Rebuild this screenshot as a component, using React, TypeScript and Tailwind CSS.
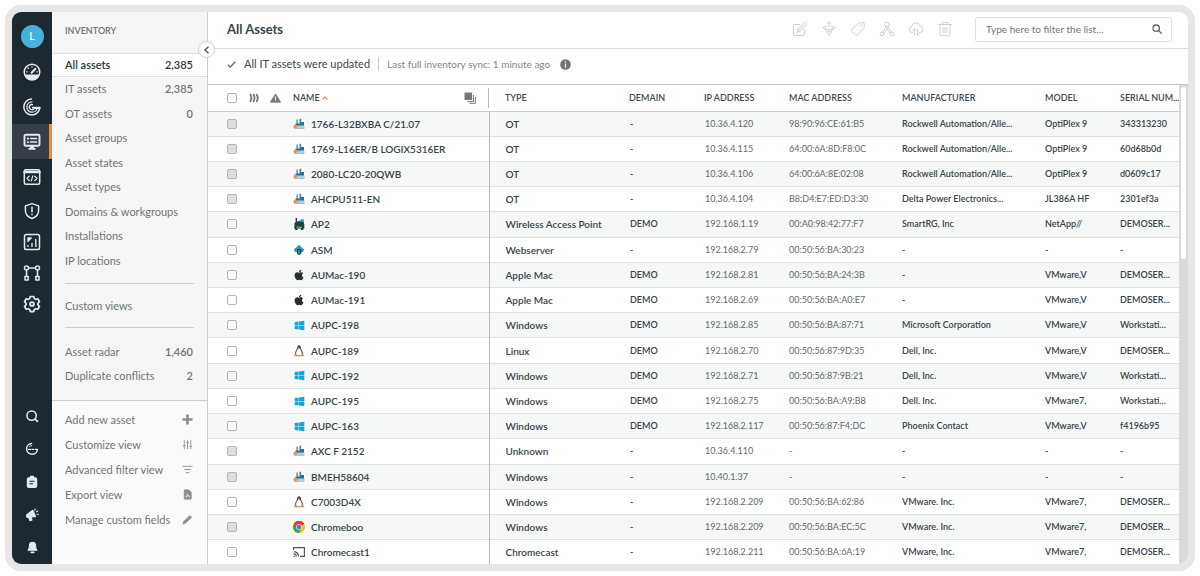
import type { ReactNode } from "react";
import { FaApple, FaWindows } from "react-icons/fa";

/* ---------- rail icons ---------- */

function Svg({ className = "size-4", children }: { className?: string; children: ReactNode }) {
  return (
    <svg viewBox="0 0 18 18" className={className} fill="none" stroke="currentColor" strokeWidth="1.5" strokeLinecap="round" strokeLinejoin="round" aria-hidden="true">
      {children}
    </svg>
  );
}

const GaugeIcon = () => (
  <Svg className="size-[18px]">
    <circle cx="9" cy="9" r="7.800" />
    <path d="M2.200 12.200h13.600A7.800 7.800 0 0 1 9 16.800a7.800 7.800 0 0 1-6.800-4.600z" fill="currentColor" />
    <path d="M8.600 9.800l3.800-4" strokeWidth="2" />
    <path d="M9 3.600v.5M5 5l.4.400M3.400 8.800h.6M14 8.800h.6" strokeWidth="1.300" />
  </Svg>
);
const RadarIcon = () => (
  <Svg className="size-[18px]">
    <path d="M8.500 1A8 8 0 1 0 16.800 9.500H9.500" strokeWidth="1.500" />
    <path d="M9 3.800A5.200 5.200 0 1 0 14 10.600" strokeWidth="1.300" />
    <path d="M9.500 6.600a2.600 2.600 0 1 0 1.700 3.800" strokeWidth="1.300" />
    <path d="M10.500 10h6" strokeWidth="2" />
  </Svg>
);
const MonitorIcon = () => (
  <Svg className="size-[18px]">
    <rect x="1.500" y="1.800" width="15" height="11" rx="1.200" strokeWidth="1.900" />
    <path d="M4.800 5.500h.4M4.800 9.100h.4" strokeWidth="1.800" />
    <path d="M7.500 5.500h6M7.500 9.100h6" strokeWidth="1.500" />
    <path d="M7 13h4v2h1.500v1.700h-7V15H7z" fill="currentColor" stroke="none" />
  </Svg>
);
const CodeIcon = () => (
  <Svg className="size-[18px]">
    <rect x="1.300" y="1.800" width="15.400" height="14.400" rx="1.500" />
    <path d="M1.500 4h15" strokeWidth="2.400" />
    <path d="M6.200 8.200L4 10.300l2.200 2.200M11.800 8.200l2.200 2.100-2.200 2.200M9.800 7.800l-1.500 5" strokeWidth="1.200" />
  </Svg>
);
const ShieldIcon = () => (
  <Svg className="size-[18px]">
    <path d="M9 1.600l6.600 2.300v4.600c0 4-2.600 6.600-6.600 8-4-1.400-6.600-4-6.600-8V3.900z" />
    <path d="M9 5.200v4.600M9 12.300v.3" strokeWidth="1.600" />
  </Svg>
);
const ChartIcon = () => (
  <Svg className="size-[18px]">
    <rect x="1.500" y="1.500" width="15" height="15" rx="1.800" />
    <path d="M5 8.200V5h3.200zM5 12.400v1M9 10.400v3M12.800 6.500v6.900" strokeWidth="1.400" fill="currentColor" />
  </Svg>
);
const NodesIcon = () => (
  <Svg className="size-[18px]">
    <circle cx="3.500" cy="4" r="2" />
    <circle cx="14.500" cy="4" r="2" />
    <rect x="2" y="12.500" width="3.200" height="3.400" />
    <rect x="12.800" y="12.500" width="3.200" height="3.400" />
    <path d="M3.500 6v6M14.500 6v6M5.500 4h7" />
  </Svg>
);
const GearIcon = () => (
  <Svg className="size-[18px]">
    <path d="M7.300 1.500h3.400l.6 2.100 1.300.8 2.200-.6 1.700 2.900-1.600 1.600v1.500l1.600 1.600-1.700 2.900-2.200-.6-1.300.8-.6 2.100H7.300l-.6-2.100-1.300-.8-2.200.6-1.700-2.900 1.600-1.600V8.300L1.500 6.700l1.700-2.900 2.200.6 1.300-.8z" strokeWidth="1.700" />
    <circle cx="9" cy="9" r="1.900" strokeWidth="1.900" />
  </Svg>
);
const RailSearchIcon = () => (
  <Svg className="size-[14px]">
    <circle cx="8.500" cy="8.500" r="6" strokeWidth="2" />
    <path d="M13 13l3 3" strokeWidth="2.200" />
  </Svg>
);
const SyncIcon = () => (
  <Svg className="size-[14px]">
    <path d="M8.500 1.800A7 7 0 1 0 16 9.800" strokeWidth="1.900" />
    <path d="M4.500 9.500H16" strokeWidth="1.700" strokeDasharray="2.500 2" />
    <path d="M5.500 6.200c.8-.9 1.800-1.300 3-1.400" strokeWidth="1.200" />
  </Svg>
);
const ClipboardIcon = () => (
  <Svg className="size-[14px]">
    <path d="M5 3.500h1.500a2.500 2 0 0 1 5 0H13a2 2 0 0 1 2 2V14a2 2 0 0 1-2 2H5a2 2 0 0 1-2-2V5.500a2 2 0 0 1 2-2z" fill="currentColor" />
    <path d="M6.300 8h5.400M6.300 11.300h3.400" stroke="#1d2830" />
  </Svg>
);
const MegaphoneIcon = () => (
  <Svg className="size-[14px]">
    <path d="M2 9l8-6 3.500 8-6 .5 1.500 4-2.500.8L4.600 12 2.500 12.200z" fill="currentColor" />
    <path d="M12.500 3l.6-1.800M14.500 5l2-1.200M15.500 8h1.700" strokeWidth="1.400" />
  </Svg>
);
const BellIcon = () => (
  <Svg className="size-[13px]">
    <path d="M9 1.800c3 0 4.300 2.200 4.300 5 0 3 .7 4.500 1.800 6H2.900c1.100-1.500 1.800-3 1.800-6 0-2.800 1.300-5 4.300-5z" fill="currentColor" />
    <path d="M7.300 15.600h3.400" strokeWidth="2.400" />
  </Svg>
);

/* ---------- toolbar icons ---------- */

function Thin({ children }: { children: ReactNode }) {
  return (
    <svg viewBox="0 0 16 16" className="size-4" fill="none" stroke="currentColor" strokeWidth="1" strokeLinecap="round" strokeLinejoin="round" aria-hidden="true">
      {children}
    </svg>
  );
}
const EditIcon = () => (
  <Thin>
    <path d="M7.500 3.500h-5a1 1 0 0 0-1 1v9a1 1 0 0 0 1 1h9a1 1 0 0 0 1-1V9" />
    <path d="M5 11l.8-3.200 6.200-6.200a1 1 0 0 1 1.400 0l1 1a1 1 0 0 1 0 1.400L8.200 10.200z" />
    <path d="M6 8l2 2M7.800 8.200l4.400-4.400" />
  </Thin>
);
const MergeIcon = () => (
  <Thin>
    <path d="M8 .8v6M6.200 2.500L8 .8l1.800 1.700" />
    <path d="M6 4.800L1.500 6.500 8 9.200l6.500-2.700L10 4.800" />
    <path d="M3.500 7.600l1 1.700L8 11l3.500-1.700 1-1.700M5.800 10.200l.6 2L8 14.500l1.600-2.300.6-2" />
  </Thin>
);
const TagIcon = () => (
  <Thin>
    <path d="M9.200 2l4.800-.3.500 4.500-7.300 7.900a1 1 0 0 1-1.400 0L1.500 10a1 1 0 0 1 0-1.400z" />
    <circle cx="11.400" cy="4.700" r=".6" />
  </Thin>
);
const RelationsIcon = () => (
  <Thin>
    <circle cx="8" cy="3.500" r="2.400" />
    <circle cx="3" cy="13" r="1.800" />
    <circle cx="13" cy="13" r="1.800" />
    <path d="M6.900 5.700L3.800 11.200M9.100 5.700l3.100 5.500M8 6v2.400L4.800 12M8 8.400l3.200 3.600" />
  </Thin>
);
const CloudIcon = () => (
  <Thin>
    <path d="M4.500 11.500H4a3 3 0 0 1-.5-5.900A4.500 4.500 0 0 1 12.200 5a3.300 3.300 0 0 1 0 6.500h-.7" />
    <path d="M6.300 14V7.800M4.800 9.300l1.500-1.500 1.500 1.500M9.700 8v6.200M8.200 12.700l1.500 1.500 1.500-1.500" />
  </Thin>
);
const TrashIcon = () => (
  <Thin>
    <path d="M1.500 3.500h13M5.500 3.500v-2h5v2M3 3.500v10a1.200 1.200 0 0 0 1.200 1.200h7.600A1.200 1.200 0 0 0 13 13.500v-10M6 6.200v5.600M8 6.200v5.600M10 6.200v5.600" />
  </Thin>
);

/* ---------- device icons ---------- */

const OtIcon = () => (
  <svg viewBox="0 0 12 12" className="size-3" aria-hidden="true">
    <path d="M3.500 1.500h1.300V6H3.500zM6.500.8h1.700v5.700H6.500z" fill="#4a7f9c" />
    <path d="M2.500 5.500h4l2-1.500h2.500V8H2.500z" fill="#2f6f93" />
    <path d="M5 7.500h6.500V10H5z" fill="#a5d3ea" />
    <circle cx="2.600" cy="8.600" r="2.200" fill="#e0995b" />
    <path d="M1 10h10.500v.9H1z" fill="#b5b9bc" />
  </svg>
);
const AccessPointIcon = () => (
  <svg viewBox="0 0 12 12" className="size-3" aria-hidden="true">
    <path d="M2.600 0h1.500v5H2.600z" fill="#2e3a40" />
    <path d="M5 3.500L9 .8l2 .8V5H5z" fill="#3fb3c4" />
    <path d="M1.500 5l2.500-1.500h6L11.300 6v4.500h-1V12H8v-1.500H4.500V12H2.200v-1.500H1.200z" fill="#2e3a40" />
    <path d="M3.500 8.500h5.500v1.700H3.500z" fill="#2fae7c" />
  </svg>
);
const WebserverIcon = () => (
  <svg viewBox="0 0 12 12" className="size-3" aria-hidden="true">
    <path d="M6 .8L8.300 3 11.300 5.500 9.500 8.200H2.500L.7 5.500 3.700 3z" fill="#2c9ab7" />
    <path d="M4 5h4.200v4.700L6 11.300 4 9.700z" fill="#27414d" />
    <path d="M5.500 6h1v4h-1z" fill="#5fb9cf" />
  </svg>
);
const LinuxIcon = () => (
  <svg viewBox="0 0 12 12" className="size-3" aria-hidden="true">
    <path d="M6 .3c1.300 0 1.800.9 1.800 2.300 0 1.700 2.200 3.300 2.200 6.200 0 1.500-1.800 2.400-4 2.400S2 10.300 2 8.800c0-2.900 2.200-4.500 2.200-6.200C4.200 1.200 4.700.3 6 .3z" fill="#444" />
    <path d="M6 3.200c1.100 0 2.900 3.300 2.900 5.500S7.400 10.600 6 10.600 3.100 10.900 3.100 8.700 4.900 3.200 6 3.200z" fill="#fff" />
    <path d="M5 2.600h2L6 3.700zM1.200 9.300l1.500-.8 1.700 2-.8 1.200-2.500-.6zM10.800 9.300l-1.500-.8-1.700 2 .8 1.200 2.500-.6z" fill="#dc9a5a" />
  </svg>
);
const ChromeIcon = () => (
  <svg viewBox="0 0 24 24" className="size-3" aria-hidden="true">
    <circle cx="12" cy="12" r="12" fill="#fbc116" />
    <path d="M12 12L1.610 6A12 12 0 0 1 22.390 6z" fill="#e33b2e" />
    <path d="M12 12L1.610 6A12 12 0 0 0 12 24l5.200-9z" fill="#2da94f" />
    <path d="M12 6.500h10.700L22.390 6A12 12 0 0 0 1.610 6l5.600 8.800z" fill="#e33b2e" />
    <circle cx="12" cy="12" r="5.600" fill="#fff" />
    <circle cx="12" cy="12" r="4.500" fill="#3f7de0" />
  </svg>
);
const CastIcon = () => (
  <svg viewBox="0 0 12 12" className="size-3" fill="none" stroke="#4a5257" strokeWidth="1.100" aria-hidden="true">
    <path d="M.6 4V1.600h10.800v8.800H7" />
    <path d="M.6 10.400h1.200M.6 7.900c1.600 0 2.700 1.100 2.700 2.600M.6 5.700c2.900 0 4.900 2 4.900 4.800" />
  </svg>
);

const deviceIcons = {
  ot: <OtIcon />,
  ap: <AccessPointIcon />,
  web: <WebserverIcon />,
  mac: <FaApple className="size-3 text-[#2a2f33]" />,
  win: <FaWindows className="size-[11px] text-[#1ba3d6]" />,
  linux: <LinuxIcon />,
  chrome: <ChromeIcon />,
  cast: <CastIcon />,
};

/* ---------- data ---------- */

type Asset = [keyof typeof deviceIcons, boolean, string, string, string, string, string, string, string, string];

const assets: Asset[] = [
  ["ot", true, "1766-L32BXBA C/21.07", "OT", "-", "10.36.4.120", "98:90:96:CE:61:B5", "Rockwell Automation/Alle...", "OptiPlex 9", "343313230"],
  ["ot", true, "1769-L16ER/B LOGIX5316ER", "OT", "-", "10.36.4.115", "64:00:6A:8D:F8:0C", "Rockwell Automation/Alle...", "OptiPlex 9", "60d68b0d"],
  ["ot", true, "2080-LC20-20QWB", "OT", "-", "10.36.4.106", "64:00:6A:8E:02:08", "Rockwell Automation/Alle...", "OptiPlex 9", "d0609c17"],
  ["ot", true, "AHCPU511-EN", "OT", "-", "10.36.4.104", "B8:D4:E7:ED:D3:30", "Delta Power Electronics...", "JL386A HF", "2301ef3a"],
  ["ap", false, "AP2", "Wireless Access Point", "DEMO", "192.168.1.19", "00:A0:98:42:77:F7", "SmartRG, Inc", "NetApp//", "DEMOSER..."],
  ["web", false, "ASM", "Webserver", "-", "192.168.2.79", "00:50:56:BA:30:23", "-", "-", "-"],
  ["mac", false, "AUMac-190", "Apple Mac", "DEMO", "192.168.2.81", "00:50:56:BA:24:3B", "-", "VMware,V", "DEMOSER..."],
  ["mac", false, "AUMac-191", "Apple Mac", "DEMO", "192.168.2.69", "00:50:56:BA:A0:E7", "-", "VMware,V", "DEMOSER..."],
  ["win", false, "AUPC-198", "Windows", "DEMO", "192.168.2.85", "00:50:56:BA:87:71", "Microsoft Corporation", "VMware,V", "Workstati..."],
  ["linux", false, "AUPC-189", "Linux", "DEMO", "192.168.2.70", "00:50:56:87:9D:35", "Dell, Inc.", "VMware,V", "DEMOSER..."],
  ["win", false, "AUPC-192", "Windows", "DEMO", "192.168.2.71", "00:50:56:87:9B:21", "Dell, Inc.", "VMware,V", "Workstati..."],
  ["win", false, "AUPC-195", "Windows", "DEMO", "192.168.2.75", "00:50:56:BA:A9:B8", "Dell. Inc.", "VMware7,", "Workstati..."],
  ["win", false, "AUPC-163", "Windows", "DEMO", "192.168.2.117", "00:50:56:87:F4;DC", "Phoenix Contact", "VMware,V", "f4196b95"],
  ["ot", true, "AXC F 2152", "Unknown", "-", "10.36.4.110", "-", "-", "-", "-"],
  ["ot", true, "BMEH58604", "Windows", "-", "10.40.1.37", "-", "-", "-", "-"],
  ["linux", false, "C7003D4X", "Windows", "-", "192.168.2.209", "00:50:56:BA:62:86", "VMware. Inc.", "VMware7,", "DEMOSER..."],
  ["chrome", true, "Chromeboo", "Windows", "-", "192.168.2.209", "00:50:56:BA:EC:5C", "VMware. Inc.", "VMware7,", "DEMOSER..."],
  ["cast", false, "Chromecast1", "Chromecast", "-", "192.168.2.211", "00:50:56:BA:6A:19", "VMware, Inc.", "VMware7,", "DEMOSER..."],
];

const navItems: { label: string; count?: string }[] = [
  { label: "IT assets", count: "2,385" },
  { label: "OT assets", count: "0" },
  { label: "Asset groups" },
  { label: "Asset states" },
  { label: "Asset types" },
  { label: "Domains & workgroups" },
  { label: "Installations" },
  { label: "IP locations" },
];

const actions: { label: string; icon: ReactNode }[] = [
  { label: "Add new asset", icon: <path d="M6 .5v11M.5 6h11" strokeWidth="2.800" /> },
  { label: "Customize view", icon: <path d="M2.500 1v10M6 1v10M9.500 1v10M1 7.500h3M4.500 4h3M8 8h3" strokeWidth="1" /> },
  { label: "Advanced filter view", icon: <path d="M.5 2.500h11M2.500 6h7M4 9.500h4" strokeWidth="1" /> },
  {
    label: "Export view",
    icon: (
      <>
        <path d="M2.500 1h5L10 3.500V11H2.500z" fill="currentColor" />
        <path d="M4.500 9V7.500h3.500V9M5 5l1.500 1.500" stroke="#fff" strokeWidth=".9" />
      </>
    ),
  },
  { label: "Manage custom fields", icon: <path d="M1 11l.8-3L8.500 1.500 10.700 3.500 4 10.200z" fill="currentColor" strokeWidth=".6" /> },
];

const railMain: { label: string; icon: ReactNode; active?: boolean }[] = [
  { label: "Dashboard", icon: <GaugeIcon /> },
  { label: "Radar", icon: <RadarIcon /> },
  { label: "Inventory", icon: <MonitorIcon />, active: true },
  { label: "Software", icon: <CodeIcon /> },
];
const railTools = [
  { label: "Risk", icon: <ShieldIcon /> },
  { label: "Reports", icon: <ChartIcon /> },
  { label: "Diagrams", icon: <NodesIcon /> },
  { label: "Configuration", icon: <GearIcon /> },
];
const railBottom = [
  { label: "Search", icon: <RailSearchIcon /> },
  { label: "Sync", icon: <SyncIcon /> },
  { label: "Tasks", icon: <ClipboardIcon /> },
  { label: "News", icon: <MegaphoneIcon /> },
  { label: "Notifications", icon: <BellIcon /> },
];
const tools = [
  { label: "Edit", icon: <EditIcon /> },
  { label: "Merge", icon: <MergeIcon /> },
  { label: "Tag", icon: <TagIcon /> },
  { label: "Relations", icon: <RelationsIcon /> },
  { label: "Rescan", icon: <CloudIcon /> },
  { label: "Delete", icon: <TrashIcon /> },
];

/* ---------- parts ---------- */

function Rail() {
  return (
    <nav aria-label="Main" className="flex w-10 shrink-0 flex-col bg-[#1d2830] text-[#e4e9ec]">
      <div className="flex h-[42px] items-end justify-center pb-[6px]">
        <button aria-label="Account" className="flex size-[23px] items-center justify-center rounded-full bg-[#44b2da] text-[11px] text-white">L</button>
      </div>
      {railMain.map((r) => (
        <button
          key={r.label}
          aria-label={r.label}
          className={`flex h-[35px] w-full items-center justify-center ${r.active ? "border-r-[3px] border-[#ee8a3c] bg-[#363f47] pl-[3px]" : ""}`}
        >
          {r.icon}
        </button>
      ))}
      <div className="mt-px flex flex-col">
        {railTools.map((r) => (
          <button key={r.label} aria-label={r.label} className="flex h-[31px] items-center justify-center">
            {r.icon}
          </button>
        ))}
      </div>
      <div className="mt-auto flex flex-col">
        {railBottom.map((r) => (
          <button key={r.label} aria-label={r.label} className="flex h-[33px] items-center justify-center">
            {r.icon}
          </button>
        ))}
      </div>
    </nav>
  );
}

function Sidebar() {
  const row = "flex items-center justify-between pl-[13px] pr-[14px]";
  return (
    <aside className="relative flex w-[156px] shrink-0 flex-col border-r border-[#cdcdcd] bg-[#f5f5f5] text-[11px] leading-4 text-[#6f7679]">
      <h2 className="flex h-[41px] items-center pb-1 pl-[13px] text-[9px] font-semibold">INVENTORY</h2>
      <a href="#all" className={`${row} h-6 border-y border-[#dedede] bg-white font-semibold text-[#2c383e]`}>
        <span>All assets</span>
        <span>2,385</span>
      </a>
      <div className="flex h-[196px] flex-col">
        {navItems.map((n) => (
          <a key={n.label} href="#view" className={`${row} flex-1`}>
            <span>{n.label}</span>
            {n.count && <span className="font-semibold">{n.count}</span>}
          </a>
        ))}
      </div>
      <div className="mx-[13px] mt-[10px] flex h-[45px] items-center border-y border-[#cdcdcd]">
        <a href="#custom">Custom views</a>
      </div>
      <div className="mt-3 flex flex-col">
        <a href="#radar" className={`${row} h-6`}>
          <span>Asset radar</span>
          <span className="font-semibold">1,460</span>
        </a>
        <a href="#duplicates" className={`${row} h-6`}>
          <span>Duplicate conflicts</span>
          <span className="font-semibold">2</span>
        </a>
      </div>
      <div className="mt-3 flex flex-1 flex-col border-t border-[#cdcdcd] bg-[#fbfbfb] pt-[6px]">
        {actions.map((a) => (
          <button key={a.label} className={`${row} h-[25px] text-left`}>
            <span>{a.label}</span>
            <svg viewBox="0 0 12 12" className="size-[11px] text-[#8c8f91]" fill="none" stroke="currentColor" aria-hidden="true">
              {a.icon}
            </svg>
          </button>
        ))}
      </div>
      <button aria-label="Collapse sidebar" className="absolute -right-2 top-[29px] z-10 flex size-[17px] items-center justify-center rounded-full border border-[#cdcdcd] bg-white text-[#555]">
        <svg viewBox="0 0 8 8" className="size-2" fill="none" stroke="currentColor" strokeWidth="1.400" aria-hidden="true">
          <path d="M5.500.8L2 4l3.500 3.200" />
        </svg>
      </button>
    </aside>
  );
}

function Check({ label, disabled = false }: { label: string; disabled?: boolean }) {
  return (
    <input
      type="checkbox"
      aria-label={label}
      disabled={disabled}
      className="block size-[10px] appearance-none rounded-[2px] border border-[#b1b5b7] bg-white disabled:bg-[#dedede]"
    />
  );
}

function AssetTable() {
  const head = "p-0 text-left text-[9px] font-semibold text-[#414c52]";
  return (
    <div className="flex min-h-0 flex-1 border-t border-[#c4c4c4]">
      <table className="w-full min-w-0 flex-1 table-fixed border-collapse whitespace-nowrap text-[9px] leading-3 text-[#37444b]">
        <colgroup>
          <col className="w-[38px]" />
          <col className="w-[47px]" />
          <col />
          <col className="w-[140px]" />
          <col className="w-[75px]" />
          <col className="w-[85px]" />
          <col className="w-[113px]" />
          <col className="w-[143px]" />
          <col className="w-[75px]" />
          <col className="w-[59px]" />
        </colgroup>
        <thead>
          <tr className="h-[26px] border-b border-[#cfcfcf]">
            <th className={`${head} pl-[19px]`}>
              <Check label="Select all assets" />
            </th>
            <th className={head}>
              <div className="flex items-center gap-[11px] pl-[3px] text-[#74797c]">
                <svg viewBox="0 0 10 10" className="size-[10px]" fill="none" stroke="currentColor" strokeWidth="1.800" aria-hidden="true">
                  <path d="M1 1c1.600 2.400 1.600 5.600 0 8M4.200 1c1.600 2.400 1.600 5.600 0 8M7.400 1c1.600 2.400 1.600 5.600 0 8" />
                </svg>
                <svg viewBox="0 0 12 10" className="h-[10px] w-[11px]" aria-hidden="true">
                  <path d="M6 .5l5.500 9H.5z" fill="currentColor" stroke="currentColor" strokeLinejoin="round" />
                  <path d="M6 3.300v3.200M6 7.600v1" stroke="#fff" strokeWidth="1.100" />
                </svg>
              </div>
            </th>
            <th className={head}>
              <div className="flex h-5 items-center gap-[2px] border-r border-[#b9b9b9] pr-3">
                <span>NAME</span>
                <svg viewBox="0 0 6 4" className="h-1 w-[6px]" fill="none" stroke="#ee8a3c" strokeWidth="1.200" aria-hidden="true">
                  <path d="M.6 3.200L3 1l2.400 2.200" />
                </svg>
                <svg viewBox="0 0 12 12" className="ml-auto size-3 text-[#74797c]" aria-hidden="true">
                  <path d="M.5.500h7.500V8H.5z" fill="currentColor" />
                  <path d="M9.500 3v6.500H3.500M11.300 5v6.300H5.500" fill="none" stroke="currentColor" />
                </svg>
              </div>
            </th>
            <th className={`${head} pl-4`}>TYPE</th>
            <th className={head}>DEMAIN</th>
            <th className={head}>IP ADDRESS</th>
            <th className={head}>MAC ADDRESS</th>
            <th className={head}>MANUFACTURER</th>
            <th className={head}>MODEL</th>
            <th className={head}>SERIAL NUM...</th>
          </tr>
        </thead>
        <tbody>
          {assets.map(([icon, disabled, name, type, domain, ip, mac, maker, model, serial]) => (
            <tr key={name} className="border-b border-[#e0e0e0] odd:bg-[#f6f7f7] last:border-b-0">
              <td className="p-0 pl-[19px]">
                <Check label={`Select ${name}`} disabled={disabled} />
              </td>
              <td className="p-0" />
              <td className="border-r border-[#b9b9b9] p-0 text-[10px] font-semibold">
                <div className="flex items-center gap-[6px]">
                  <span className="flex w-3 justify-center">{deviceIcons[icon]}</span>
                  <span>{name}</span>
                </div>
              </td>
              <td className="p-0 pl-4 text-[10px] font-semibold">{type}</td>
              <td className="p-0 pl-px font-semibold">{domain}</td>
              <td className="p-0 pl-px text-[#62696d]">{ip}</td>
              <td className="p-0 text-[#62696d]">{mac}</td>
              <td className="p-0 font-semibold">{maker}</td>
              <td className="p-0 font-semibold">{model}</td>
              <td className="p-0 font-semibold">{serial}</td>
            </tr>
          ))}
        </tbody>
      </table>
      <div className="w-[9px] shrink-0 bg-[#dadada] px-[2px] pt-[2px]">
        <div className="h-[172px] rounded-full bg-white" />
      </div>
    </div>
  );
}

export default function App() {
  return (
    <div className="flex min-h-screen bg-white p-[5px] font-['Lato','Noto_Sans',sans-serif]">
      <div className="flex min-w-0 flex-1 overflow-hidden rounded-[16px] border-[7px] border-[#e7e7e7] bg-white">
        <Rail />
        <Sidebar />
        <main className="flex min-w-0 flex-1 flex-col">
          <header className="flex h-[37px] items-center border-b border-[#dcdcdc] pb-[2px] pl-[19px] pr-4">
            <h1 className="text-[13px] font-bold leading-4 text-[#3a464c]">All Assets</h1>
            <div className="ml-auto flex items-center gap-[13px] text-[#cfd1d2]">
              {tools.map((t) => (
                <button key={t.label} aria-label={t.label}>
                  {t.icon}
                </button>
              ))}
            </div>
            <label className="ml-[22px] flex h-[25px] w-[197px] items-center rounded-[2px] border border-[#e2e2e2] pl-[10px] pr-[9px]">
              <input
                type="text"
                aria-label="Filter the list"
                placeholder="Type here to filter the list..."
                className="min-w-0 flex-1 bg-transparent text-[10px] text-[#444] outline-none placeholder:text-[#70777a]"
              />
              <svg viewBox="0 0 10 10" className="size-[10px] text-[#5f6568]" fill="none" stroke="currentColor" strokeWidth="1.300" aria-hidden="true">
                <circle cx="4.200" cy="4.200" r="3.200" />
                <path d="M6.600 6.600l3 3" />
              </svg>
            </label>
          </header>
          <div className="flex h-[35px] items-center pb-[5px] pl-[19px] text-[11px] leading-4 text-[#3a464c]">
            <svg viewBox="0 0 10 10" className="mr-2 size-[9px] text-[#666d70]" fill="none" stroke="currentColor" strokeWidth="1.600" aria-hidden="true">
              <path d="M1 5.200l2.800 2.600L9.200 2" />
            </svg>
            <span>All IT assets were updated</span>
            <span className="mx-2 h-[14px] w-px bg-[#cdcdcd]" />
            <span className="text-[10px] text-[#80878a]">Last full inventory sync: 1 minute ago</span>
            <svg viewBox="0 0 11 11" className="ml-[10px] size-[11px]" aria-hidden="true">
              <circle cx="5.500" cy="5.500" r="5.300" fill="#6d7376" />
              <path d="M5.500 2.200v1.200M5.500 4.500v4.300" stroke="#fff" strokeWidth="1.200" />
            </svg>
          </div>
          <AssetTable />
        </main>
      </div>
    </div>
  );
}
